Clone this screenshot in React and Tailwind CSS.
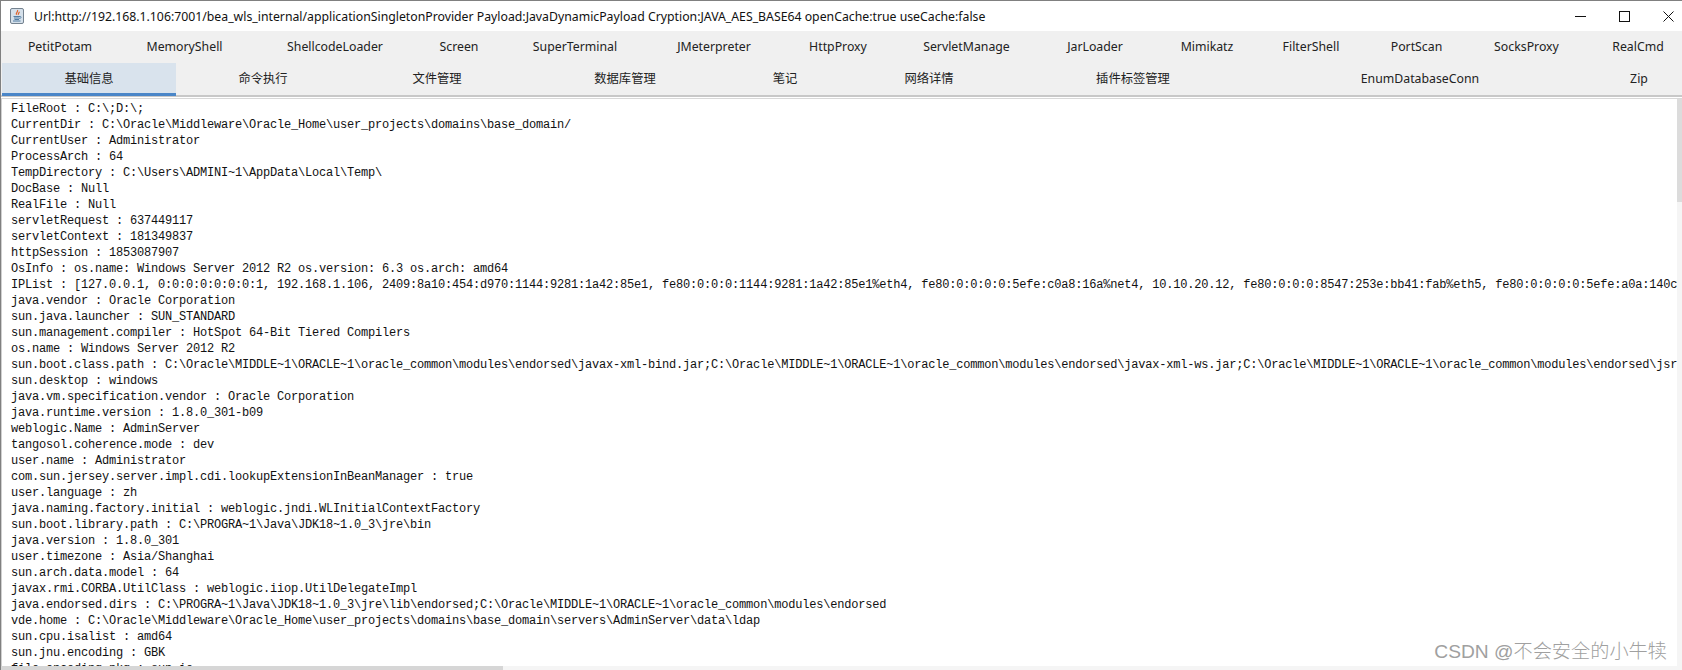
const uiFont = "[font-family:'Noto_Sans','Noto_Sans_CJK_SC',sans-serif]"

const pluginTabs = [
  { label: 'PetitPotam', width: 'w-[116px]' },
  { label: 'MemoryShell', width: 'w-[133px]' },
  { label: 'ShellcodeLoader', width: 'w-[168px]' },
  { label: 'Screen', width: 'w-[80px]' },
  { label: 'SuperTerminal', width: 'w-[152px]' },
  { label: 'JMeterpreter', width: 'w-[126px]' },
  { label: 'HttpProxy', width: 'w-[122px]' },
  { label: 'ServletManage', width: 'w-[135px]' },
  { label: 'JarLoader', width: 'w-[122px]' },
  { label: 'Mimikatz', width: 'w-[102px]' },
  { label: 'FilterShell', width: 'w-[106px]' },
  { label: 'PortScan', width: 'w-[105px]' },
  { label: 'SocksProxy', width: 'w-[115px]' },
  { label: 'RealCmd', width: 'w-[90px] ml-[9px]' },
]

const mainTabs = [
  { label: '命令执行', width: 'w-[174px]' },
  { label: '文件管理', width: 'w-[174px]' },
  { label: '数据库管理', width: 'w-[202px]' },
  { label: '笔记', width: 'w-[118px]' },
  { label: '网络详情', width: 'w-[170px]' },
  { label: '插件标签管理', width: 'w-[238px]' },
  { label: 'EnumDatabaseConn', width: 'w-[336px]' },
  { label: 'Zip', width: 'w-[86px] ml-[8px]' },
]

const infoLines = [
  'FileRoot : C:\\;D:\\;',
  'CurrentDir : C:\\Oracle\\Middleware\\Oracle_Home\\user_projects\\domains\\base_domain/',
  'CurrentUser : Administrator',
  'ProcessArch : 64',
  'TempDirectory : C:\\Users\\ADMINI~1\\AppData\\Local\\Temp\\',
  'DocBase : Null',
  'RealFile : Null',
  'servletRequest : 637449117',
  'servletContext : 181349837',
  'httpSession : 1853087907',
  'OsInfo : os.name: Windows Server 2012 R2 os.version: 6.3 os.arch: amd64',
  'IPList : [127.0.0.1, 0:0:0:0:0:0:0:1, 192.168.1.106, 2409:8a10:454:d970:1144:9281:1a42:85e1, fe80:0:0:0:1144:9281:1a42:85e1%eth4, fe80:0:0:0:0:5efe:c0a8:16a%net4, 10.10.20.12, fe80:0:0:0:8547:253e:bb41:fab%eth5, fe80:0:0:0:0:5efe:a0a:140c%net5]',
  'java.vendor : Oracle Corporation',
  'sun.java.launcher : SUN_STANDARD',
  'sun.management.compiler : HotSpot 64-Bit Tiered Compilers',
  'os.name : Windows Server 2012 R2',
  'sun.boot.class.path : C:\\Oracle\\MIDDLE~1\\ORACLE~1\\oracle_common\\modules\\endorsed\\javax-xml-bind.jar;C:\\Oracle\\MIDDLE~1\\ORACLE~1\\oracle_common\\modules\\endorsed\\javax-xml-ws.jar;C:\\Oracle\\MIDDLE~1\\ORACLE~1\\oracle_common\\modules\\endorsed\\jsr',
  'sun.desktop : windows',
  'java.vm.specification.vendor : Oracle Corporation',
  'java.runtime.version : 1.8.0_301-b09',
  'weblogic.Name : AdminServer',
  'tangosol.coherence.mode : dev',
  'user.name : Administrator',
  'com.sun.jersey.server.impl.cdi.lookupExtensionInBeanManager : true',
  'user.language : zh',
  'java.naming.factory.initial : weblogic.jndi.WLInitialContextFactory',
  'sun.boot.library.path : C:\\PROGRA~1\\Java\\JDK18~1.0_3\\jre\\bin',
  'java.version : 1.8.0_301',
  'user.timezone : Asia/Shanghai',
  'sun.arch.data.model : 64',
  'javax.rmi.CORBA.UtilClass : weblogic.iiop.UtilDelegateImpl',
  'java.endorsed.dirs : C:\\PROGRA~1\\Java\\JDK18~1.0_3\\jre\\lib\\endorsed;C:\\Oracle\\MIDDLE~1\\ORACLE~1\\oracle_common\\modules\\endorsed',
  'vde.home : C:\\Oracle\\Middleware\\Oracle_Home\\user_projects\\domains\\base_domain\\servers\\AdminServer\\data\\ldap',
  'sun.cpu.isalist : amd64',
  'sun.jnu.encoding : GBK',
  'file.encoding.pkg : sun.io',
]

function JavaIcon() {
  return (
    <svg width="14" height="16" viewBox="0 0 14 16" className="shrink-0">
      <rect x="0.5" y="0.5" width="13" height="15" rx="1.5" fill="#d5e0ea" stroke="#74828f" />
      <path d="M7.5 2c1.2 1.6-2.2 2.7-1 4.8M9.2 3.8c.4 1.1-1.6 1.8-.8 3" fill="none" stroke="#e0622a" strokeWidth="1.2" />
      <path d="M3.5 8.5h6.5M4 10h5.5M4.5 11.5h4.5M3 13h7.5" fill="none" stroke="#44729c" strokeWidth="0.9" />
      <path d="M10 8.5c1.6-.2 1.6 1.8-.6 2" fill="none" stroke="#44729c" strokeWidth="0.8" />
    </svg>
  )
}

function TitleBar() {
  return (
    <div className="flex h-[30px] items-center bg-white pl-[9px]">
      <JavaIcon />
      <span className={`mt-[2px] ml-[10px] text-[12.28px] whitespace-nowrap text-[#111] ${uiFont}`}>
        Url:http://192.168.1.106:7001/bea_wls_internal/applicationSingletonProvider Payload:JavaDynamicPayload Cryption:JAVA_AES_BASE64 openCache:true useCache:false
      </span>
      <div className="ml-auto flex items-center pr-[8px]">
        <svg width="11" height="11" viewBox="0 0 11 11" className="mr-[33px]">
          <path d="M0 5.5h11" stroke="#111" strokeWidth="1" />
        </svg>
        <svg width="11" height="11" viewBox="0 0 11 11" className="mr-[33px]">
          <rect x="0.5" y="0.5" width="10" height="10" fill="none" stroke="#111" strokeWidth="1" />
        </svg>
        <svg width="11" height="11" viewBox="0 0 11 11">
          <path d="M0.5 0.5l10 10M10.5 0.5l-10 10" stroke="#111" strokeWidth="1" />
        </svg>
      </div>
    </div>
  )
}

function Tab({ label, width }) {
  return <div className={`flex h-full shrink-0 items-center justify-center pt-[1px] ${width}`}>{label}</div>
}

function TabBars() {
  return (
    <div className={`bg-[#f0f0f0] text-[12.3px] whitespace-nowrap text-[#222] ${uiFont}`}>
      <div className="flex h-[32px] pl-[1px]">
        {pluginTabs.map((tab) => (
          <Tab key={tab.label} {...tab} />
        ))}
      </div>
      <div className="flex h-[33px] border-b border-[#c8c8c8] pl-[1px]">
        <div className="-mb-[1px] flex h-[33px] w-[174px] shrink-0 items-center justify-center border-b-[3px] border-[#4a86c8] bg-[#d9e3ed] pt-[3px]">
          基础信息
        </div>
        {mainTabs.map((tab) => (
          <Tab key={tab.label} {...tab} />
        ))}
      </div>
      <div className="h-[1px] bg-[#c8c8c8]" />
      <div className="h-[1px] bg-white" />
      <div className="h-[1px] bg-[#d8d8d8]" />
    </div>
  )
}

function InfoPanel() {
  return (
    <div className="relative flex min-h-0 flex-1 flex-col bg-white">
      <div className="flex min-h-0 flex-1">
        <div className="min-w-0 flex-1 overflow-hidden border-l border-[#d0d0d0] pt-[2px] pl-[9px] font-['Liberation_Mono',monospace] text-[12px] leading-[16px] tracking-[-0.2px] whitespace-pre text-[#111]">
          {infoLines.map((line) => (
            <div key={line}>{line}</div>
          ))}
        </div>
        <div className="w-[5px] shrink-0 bg-[#f5f5f5]">
          <div className="h-[103px] bg-[#dcdcdc]" />
        </div>
      </div>
      <div className="h-[4px] shrink-0 bg-[#f5f5f5]">
        <div className="h-full w-[502px] bg-[#d6d6d6]" />
      </div>
      <div className="absolute right-[15px] bottom-[8px] font-['Liberation_Sans','Noto_Sans_CJK_SC',sans-serif] text-[19.2px] leading-[20px] font-light whitespace-nowrap text-[#a0a0a0]">
        CSDN @不会安全的小牛犊
      </div>
    </div>
  )
}

export default function App() {
  return (
    <div className="flex h-[670px] w-[1682px] flex-col overflow-hidden border-t border-l border-[#808080] bg-white">
      <TitleBar />
      <TabBars />
      <InfoPanel />
    </div>
  )
}
